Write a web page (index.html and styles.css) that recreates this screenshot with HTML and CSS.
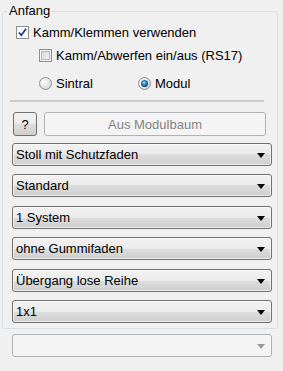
FILE: index.html
```html
<!DOCTYPE html>
<html lang="de">

<head>
    <meta charset="UTF-8">
    <title>Anfang</title>
    <link rel="stylesheet" href="styles.css">
</head>

<body>
    <!-- Gruppe Anfang -->
    <fieldset class="gruppe">
        <legend>Anfang</legend>
        <div class="inhalt">
            <div class="zeile zeile-1">
                <span class="chk">
                    <svg width="11" height="11" viewBox="0 0 11 11"><path d="M2 5.5 L4.3 8.3 L9 1.8" fill="none" stroke="#22438e" stroke-width="1.8"/></svg>
                </span>
                <span>Kamm/Klemmen verwenden</span>
            </div>
            <div class="zeile zeile-2 einrueck">
                <span class="chk leer"></span>
                <span>Kamm/Abwerfen ein/aus (RS17)</span>
            </div>
            <div class="zeile zeile-3 einrueck">
                <div class="radio-item">
                    <span class="radio"></span>
                    <span>Sintral</span>
                </div>
                <div class="radio-item">
                    <span class="radio an"></span>
                    <span>Modul</span>
                </div>
            </div>
            <div class="trenner"></div>
            <div class="knopf-zeile">
                <button class="knopf frage">?</button>
                <button class="knopf aus" disabled>Aus Modulbaum</button>
            </div>
            <div class="combo erste">Stoll mit Schutzfaden</div>
            <div class="combo">Standard</div>
            <div class="combo">1 System</div>
            <div class="combo">ohne Gummifaden</div>
            <div class="combo">Übergang lose Reihe</div>
            <div class="combo">1x1</div>
        </div>
    </fieldset>

    <div class="combo aus unten"></div>
</body>

</html>
```

FILE: styles.css
```css
/* Allgemein */
body {
    margin: 0;
    background-color: #f0f0f0;
    font-family: "Liberation Sans", Arial, sans-serif;
    font-size: 13px;
    line-height: 15px;
    color: #000;
}

/* Gruppe */
.gruppe {
    margin: 3px 5px 0 2px;
    padding: 0;
    min-inline-size: 0;
    border: 1px solid #d5dfe5;
    border-radius: 3px;
}

.gruppe legend {
    margin-left: 4px;
    padding: 0 2px 2px 2px;
    line-height: 15px;
}

.inhalt {
    padding: 5px 5px 5px 9px;
}

.zeile {
    display: flex;
    align-items: center;
    gap: 4px;
    height: 15px;
    padding-left: 4px;
}

.zeile-2 {
    margin-top: 8px;
}

.zeile-3 {
    margin-top: 13px;
    gap: 0;
}

.einrueck {
    padding-left: 27px;
}

/* Checkbox */
.chk {
    box-sizing: border-box;
    width: 13px;
    height: 13px;
    border: 1px solid #8e8f8f;
    background: linear-gradient(135deg, #f4f4f4, #ffffff);
    display: flex;
    align-items: center;
    justify-content: center;
}

.chk.leer {
    background: linear-gradient(135deg, #cfd2d6, #f7f7f7);
    box-shadow: inset 0 0 0 1px #f4f4f4, inset 0 0 0 2px #b7bcc2;
}

/* Radio */
.radio-item {
    display: flex;
    align-items: center;
    gap: 4px;
    width: 99px;
}

.radio {
    box-sizing: border-box;
    width: 13px;
    height: 13px;
    border-radius: 50%;
    border: 1px solid #8e8f8f;
    background: radial-gradient(circle at 35% 30%, #ffffff, #e8e8e8 45%, #c9c9c9);
    display: flex;
    align-items: center;
    justify-content: center;
}

.radio.an::after {
    content: "";
    width: 7px;
    height: 7px;
    border-radius: 50%;
    background: radial-gradient(circle at 45% 40%, #a8e4ff 0, #2b86c8 35%, #0b3963 75%, #06243f);
}

/* Trennlinie */
.trenner {
    height: 2px;
    margin: 9px 8px 0 -2px;
    background-color: #cbcbcb;
}

/* Knöpfe */
.knopf-zeile {
    display: flex;
    gap: 7px;
    margin: 10px 6px 0 1px;
}

.knopf {
    box-sizing: border-box;
    height: 24px;
    padding: 0;
    border: 1px solid #707070;
    border-radius: 3px;
    background: linear-gradient(#f2f2f2, #ebebeb 50%, #dddddd 50%, #cfcfcf);
    font-family: inherit;
    font-size: 13px;
    color: #000;
}

.frage {
    width: 24px;
}

.knopf.aus {
    flex: 1;
    border-color: #adb2b5;
    background: #f4f4f4;
    color: #838383;
}

/* Auswahllisten */
.combo {
    box-sizing: border-box;
    height: 23px;
    margin-top: 8.4px;
    padding: 3px 0 0 3px;
    border: 1px solid #707070;
    border-radius: 3px;
    background: linear-gradient(#f2f2f2, #ebebeb 50%, #dddddd 50%, #cfcfcf);
    box-shadow: inset 0 0 0 1px rgba(255, 255, 255, 0.6);
    position: relative;
}

.combo::after {
    content: "";
    position: absolute;
    right: 6px;
    top: 9px;
    border-left: 4.5px solid transparent;
    border-right: 4.5px solid transparent;
    border-top: 5px solid #000;
}

.combo.erste {
    margin-top: 7px;
}

.combo.aus {
    border-color: #adb2b5;
    background: #f4f4f4;
    box-shadow: none;
}

.combo.aus::after {
    border-top-color: #9a9a9a;
}

.unten {
    width: 260px;
    margin: 5px 0 0 12px;
}
```
